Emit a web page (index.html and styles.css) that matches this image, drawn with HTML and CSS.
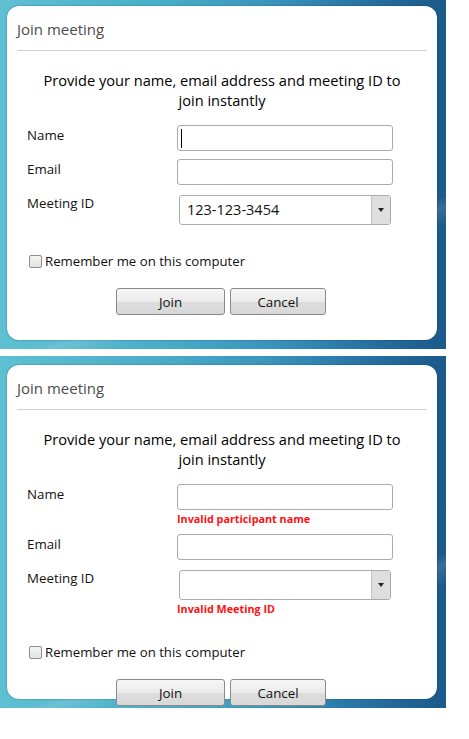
FILE: index.html
```html
<!DOCTYPE html>
<html>
<head>
<meta charset="utf-8">
<link rel="stylesheet" href="styles.css">
</head>
<body>
<div class="panel panel-first">
  <div class="card">
    <div class="title">Join meeting</div>
    <div class="divider"></div>
    <p class="intro">Provide your name, email address and meeting ID to join instantly</p>
    <div class="form">
      <label class="lbl">Name</label>
      <div class="cell">
        <div class="field"><span class="caret"></span></div>
      </div>
      <label class="lbl">Email</label>
      <div class="cell">
        <div class="field"></div>
      </div>
      <label class="lbl">Meeting ID</label>
      <div class="cell">
        <div class="combo"><span class="combo-value">123-123-3454</span><span class="combo-btn"><svg width="6" height="4" viewBox="0 0 6 4"><path d="M0 0H6L3 4Z" fill="#222"/></svg></span></div>
      </div>
    </div>
    <div class="remember"><span class="check"></span><span>Remember me on this computer</span></div>
    <div class="buttons"><button class="btn btn-join">Join</button><button class="btn btn-cancel">Cancel</button></div>
  </div>
</div>
<div class="panel">
  <div class="card">
    <div class="title">Join meeting</div>
    <div class="divider"></div>
    <p class="intro">Provide your name, email address and meeting ID to join instantly</p>
    <div class="form">
      <label class="lbl">Name</label>
      <div class="cell">
        <div class="field"></div>
        <div class="error">Invalid participant name</div>
      </div>
      <label class="lbl">Email</label>
      <div class="cell">
        <div class="field"></div>
      </div>
      <label class="lbl">Meeting ID</label>
      <div class="cell">
        <div class="combo"><span class="combo-value"></span><span class="combo-btn"><svg width="6" height="4" viewBox="0 0 6 4"><path d="M0 0H6L3 4Z" fill="#222"/></svg></span></div>
        <div class="error">Invalid Meeting ID</div>
      </div>
    </div>
    <div class="remember"><span class="check"></span><span>Remember me on this computer</span></div>
    <div class="buttons"><button class="btn btn-join">Join</button><button class="btn btn-cancel">Cancel</button></div>
  </div>
</div>
</body>
</html>
```
FILE: styles.css
```css
html, body {
  margin: 0;
  padding: 0;
  background: #ffffff;
}
body {
  font-family: "Open Sans", "Noto Sans", sans-serif;
  color: #1a1a1a;
  width: 469px;
}
.panel {
  width: 446px;
  box-sizing: border-box;
  padding: 9px 9px 9px 7px;
  margin-bottom: 7px;
  background:
    linear-gradient(160deg, rgba(255,255,255,0) 0%, rgba(255,255,255,0) 70%, rgba(255,255,255,0.12) 72%, rgba(255,255,255,0) 76%),
    linear-gradient(to right, #5fc0d2 0%, #4aaec8 35%, #3a95bd 60%, #2a78a8 78%, #1f6394 92%, #1b5a8b 100%);
}
.panel-first {
  padding-top: 6px;
}
.card {
  width: 430px;
  height: 334px;
  box-sizing: border-box;
  background: #ffffff;
  border-radius: 12px;
  padding: 0 10px;
  box-shadow: 0 0 2px rgba(0, 40, 70, 0.45);
}
.title {
  padding-top: 14px;
  font-size: 15px;
  line-height: 18px;
  color: #4d4d4d;
}
.divider {
  margin-top: 12px;
  height: 1px;
  background: #cfcfcf;
}
.intro {
  margin: 19px 0 0;
  text-align: center;
  font-size: 14.6px;
  line-height: 20px;
  color: #000000;
  padding: 0 14px;
}
.form {
  margin-top: 15px;
  padding-left: 10px;
  display: grid;
  grid-template-columns: 150px 216px;
  row-gap: 8px;
  align-items: start;
}
.lbl {
  font-size: 13.3px;
  line-height: 18px;
  margin-top: 1px;
  color: #111111;
}
.field {
  height: 26px;
  box-sizing: border-box;
  border: 1px solid #ababab;
  border-radius: 3px;
  background: #ffffff;
  display: flex;
  align-items: center;
  padding-left: 3px;
}
.caret {
  width: 1px;
  height: 19px;
  background: #000000;
}
.combo {
  margin: 2px 2px 0 2px;
  height: 30px;
  box-sizing: border-box;
  border: 1px solid #ababab;
  border-radius: 3px;
  display: flex;
  overflow: hidden;
}
.combo-value {
  flex: 1;
  padding-left: 7px;
  font-size: 14.5px;
  line-height: 28px;
  color: #111111;
}
.combo-btn {
  width: 18px;
  background: #dedede;
  border-left: 1px solid #c4c4c4;
  display: flex;
  align-items: center;
  justify-content: center;
}
.error {
  margin-top: 2px;
  font-size: 10.8px;
  line-height: 14px;
  font-weight: bold;
  color: #ff1010;
}
.remember {
  margin-top: 27px;
  padding-left: 12px;
  display: flex;
  align-items: center;
  gap: 3px;
  font-size: 13.2px;
  line-height: 18px;
  color: #111111;
}
.check {
  width: 13px;
  height: 13px;
  box-sizing: border-box;
  border: 1px solid #8e8e8e;
  border-radius: 2px;
  background: linear-gradient(#f4f4f4, #e2e2e2);
}
.buttons {
  margin-top: 18px;
  padding-right: 2px;
  display: flex;
  justify-content: center;
  gap: 5px;
}
.btn {
  height: 27px;
  box-sizing: border-box;
  border: 1px solid #8a8a8a;
  border-radius: 3px;
  background: linear-gradient(#f6f6f6 0%, #ebebeb 50%, #dddddd 51%, #d8d8d8 100%);
  font-family: "Open Sans", "Noto Sans", sans-serif;
  font-size: 13.3px;
  color: #111111;
  padding: 0;
}
.btn-join {
  width: 109px;
}
.btn-cancel {
  width: 96px;
}
```
